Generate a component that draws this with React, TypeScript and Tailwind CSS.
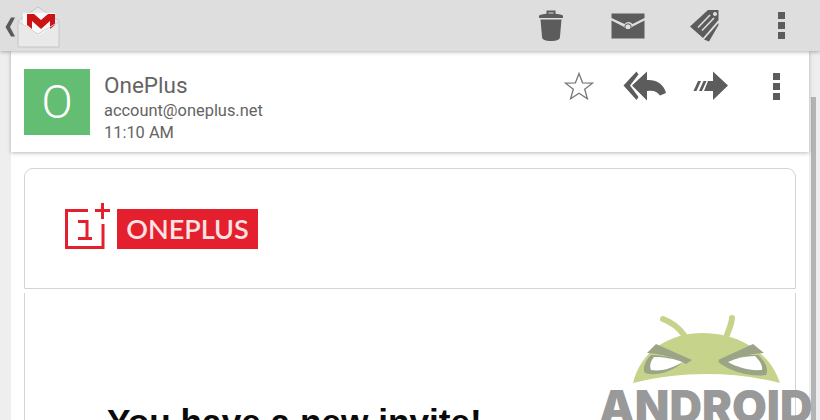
const Trash = () => (
  <svg width="26" height="34" viewBox="0 0 26 34" fill="#5c5c5c">
    <path d="M8.500 5V1.500h9V5h-2V3.500h-5V5z" />
    <path d="M1 6.500C4 5 9 4.500 13 4.500s9 .5 12 2V9H1z" />
    <path d="M2.500 10.500h21l-1.600 18c-.2 2-3.400 3.500-8.900 3.500s-8.700-1.500-8.900-3.500z" />
  </svg>
);

const Envelope = () => (
  <svg width="34" height="26" viewBox="0 0 34 26" fill="#5c5c5c">
    <path d="M0.500 0.500h33v4.500l-12 6a5 5 0 0 0-8 0l-13-6z" />
    <path d="M0.500 7.500l12.200 6.300a5 5 0 0 0 8.600 0l12.200-6.300V25.500H0.500z" />
    <circle cx="17" cy="14" r="3.200" fill="none" stroke="#5c5c5c" strokeWidth="1" />
  </svg>
);

const Tag = () => (
  <svg width="32" height="36" viewBox="0 0 32 36" fill="#5c5c5c">
    <path d="M19 2h10.500v10L14 30 1 18.500zM26 4a2 2 0 1 0 .01 0z" fillRule="evenodd" />
    <path d="M29.500 15v2L20 33.500 15 31.500z" />
    <path d="M9 19.500L21 7M13 22.500L25 10" stroke="#dddddd" strokeWidth="1.600" fill="none" />
  </svg>
);

const Dots = () => (
  <div className="flex flex-col gap-[3px]">
    <div className="w-[7px] h-[7px] bg-[#5c5c5c]" />
    <div className="w-[7px] h-[7px] bg-[#5c5c5c]" />
    <div className="w-[7px] h-[7px] bg-[#5c5c5c]" />
  </div>
);

const Star = () => (
  <svg width="30" height="28" viewBox="0 0 30 28" fill="none" stroke="#777777" strokeWidth="1.300">
    <path d="M15 1.500l3.600 9.300 9.900.4-7.800 6.100 2.700 9.500L15 21.300 6.600 26.800l2.700-9.500-7.800-6.100 9.900-.4z" />
  </svg>
);

const ReplyAll = () => (
  <svg width="44" height="30" viewBox="0 0 44 30" fill="#5c5c5c">
    <path d="M13.500 0.500L0.500 14.500l13 14.500 2-3L7 14.500l8.500-11z" />
    <path d="M24 0.500L9 14.500 24 29.500V20c6-1 10 0 13 4.500l6-2.500C41 13 33 8.500 24 9z" />
  </svg>
);

const Forward = () => (
  <svg width="36" height="30" viewBox="0 0 36 30" fill="#5c5c5c">
    <path d="M20 0.500L35 14.500 20 29V20H11l4-10h5z" />
    <path d="M0.500 20l4.500-10h3l-4.500 10zM6 20l4.500-10h3L9 20z" />
  </svg>
);

const Chevron = () => (
  <svg width="12" height="20" viewBox="0 0 12 20" fill="#5a5a5a">
    <path d="M6 0.500h4L5 10l5 9.500H6L0.500 10z" />
  </svg>
);

const GmailIcon = () => (
  <svg width="44" height="42" viewBox="0 0 44 42">
    <path d="M1 15L21 1l21 14v26H1z" fill="#e9e9e9" stroke="#c6c6c6" strokeWidth="1" />
    <path d="M6 7h32v13L22 29 6 20z" fill="#fafafa" />
    <path d="M10 8h7l7 6 7-6h7v11l-5 4v-8l-9 8-9-8v8l-5-4z" fill="#cc1414" />
    <path d="M1.500 16L21 28l20.500-12" fill="none" stroke="#cfcfcf" strokeWidth="1" />
  </svg>
);

const OnePlusMark = () => (
  <svg width="46" height="46" viewBox="0 0 46 46" fill="none" stroke="#e41f2e" strokeWidth="3">
    <path d="M23 7.500H1.500v37H38V21" />
    <path d="M37.500 0v16M30 7.500h15" />
    <path d="M13 18.500h9v17M13 35.500h14" />
  </svg>
);

const AndroidHead = () => (
  <svg width="148" height="70" viewBox="0 0 148 70">
    <path d="M0 68C8 36 36 18 70 18s67 18 77 50C100 56 48 56 0 68z" fill="#c5d48a" />
    <path d="M30 4C38 7 46 13 51 20" stroke="#c5d48a" strokeWidth="6" strokeLinecap="round" fill="none" />
    <path d="M99 3C99 8 96 14 94 20" stroke="#c5d48a" strokeWidth="6" strokeLinecap="round" fill="none" />
    <path d="M18 40C12 46 9 54 12 58 24 62 40 56 50 47 42 43 30 40 18 40z" fill="#9ba486" />
    <path d="M21 42C18 46 16 50 18 55 30 57 41 52 50 47 42 44 31 42 21 42z" fill="#ffffff" />
    <path d="M85 47C95 40 110 40 125 40 132 46 136 54 133 60 116 62 97 56 85 47z" fill="#9ba486" />
    <path d="M95 47C103 43 112 41 122 41 126 45 130 50 129 55 116 56 104 52 95 47z" fill="#ffffff" />
    <path d="M14 38L23 29 59 45 53 49C42 43 30 39 14 38z" fill="#9ba486" />
    <path d="M131 38L120 29 85 45 90 49C100 43 115 39 131 38z" fill="#9ba486" />
  </svg>
);

export default function App() {
  return (
    <div className="relative w-[820px] h-[420px] overflow-hidden flex flex-col bg-[#eeeeee] font-['Roboto',sans-serif]">
      <header className="h-[51px] shrink-0 flex items-center bg-[#dedede] shadow-[0_1px_4px_rgba(0,0,0,0.3)] z-10">
        <div className="flex items-center pl-[5px] pt-[3px]">
          <div className="w-[12px] pb-[1px]"><Chevron /></div>
          <GmailIcon />
        </div>
        <div className="ml-auto flex items-center pr-[35px]">
          <Trash />
          <div className="ml-[47px]"><Envelope /></div>
          <div className="ml-[44px]"><Tag /></div>
          <div className="ml-[57px]"><Dots /></div>
        </div>
      </header>

      <div className="flex flex-1 min-h-0 px-[11px]">
        <main className="flex-1 min-w-0 flex flex-col bg-white">
          <section className="h-[101px] shrink-0 flex items-center pl-[13px] pr-[29px] pt-[1px] bg-white shadow-[0_1px_4px_rgba(0,0,0,0.28)] z-[5]">
            <div className="w-[66px] h-[66px] flex items-center justify-center bg-[#63bd72] text-white text-[46px] font-light leading-none">O</div>
            <div className="ml-[14px] self-start mt-[20px] text-[#646464]">
              <div className="text-[22.500px] leading-[26px]">OnePlus</div>
              <div className="text-[16.400px] leading-[22px] mt-[2px]">account@oneplus.net</div>
              <div className="text-[16.400px] leading-[21px]">11:10 AM</div>
            </div>
            <div className="ml-auto self-start mt-[19px] flex items-center">
              <Star />
              <div className="ml-[29px]"><ReplyAll /></div>
              <div className="ml-[26px]"><Forward /></div>
              <div className="ml-[44px]"><Dots /></div>
            </div>
          </section>

          <div className="flex-1 min-h-0 flex flex-col px-[13px] pt-[16px]">
            <section className="h-[121px] shrink-0 flex items-center pl-[40px] pb-[6px] bg-white border border-[#d4d4d4] rounded-t-[9px]">
              <div className="flex items-end">
                <OnePlusMark />
                <div className="ml-[6px] w-[141px] h-[40px] flex items-center justify-center bg-[#e41f2e] text-[#fbe3e3] text-[27px] leading-none font-['Lato',sans-serif] font-semibold">ONEPLUS</div>
              </div>
            </section>
            <section className="mt-[4px] flex-1 min-h-0 border-x border-[#d4d4d4] pl-[82px] pt-[109px]">
              <h1 className="text-[35.200px] leading-[40px] font-bold text-[#0a0a0a] font-['Liberation_Sans',sans-serif] whitespace-nowrap">You have a new invite!</h1>
            </section>
          </div>
        </main>
      </div>

      <div className="absolute left-[811px] top-[97px] w-[5px] h-[323px] bg-[#b4b4b4]" />

      <div className="absolute left-[599px] top-[315px] w-[221px] h-[105px] overflow-hidden">
        <div className="ml-[34px]"><AndroidHead /></div>
        <div className="absolute left-0 top-[62px] text-[45px] leading-[60px] font-black text-[#999999] font-['Inter',sans-serif] whitespace-nowrap">ANDROID</div>
      </div>
    </div>
  );
}
